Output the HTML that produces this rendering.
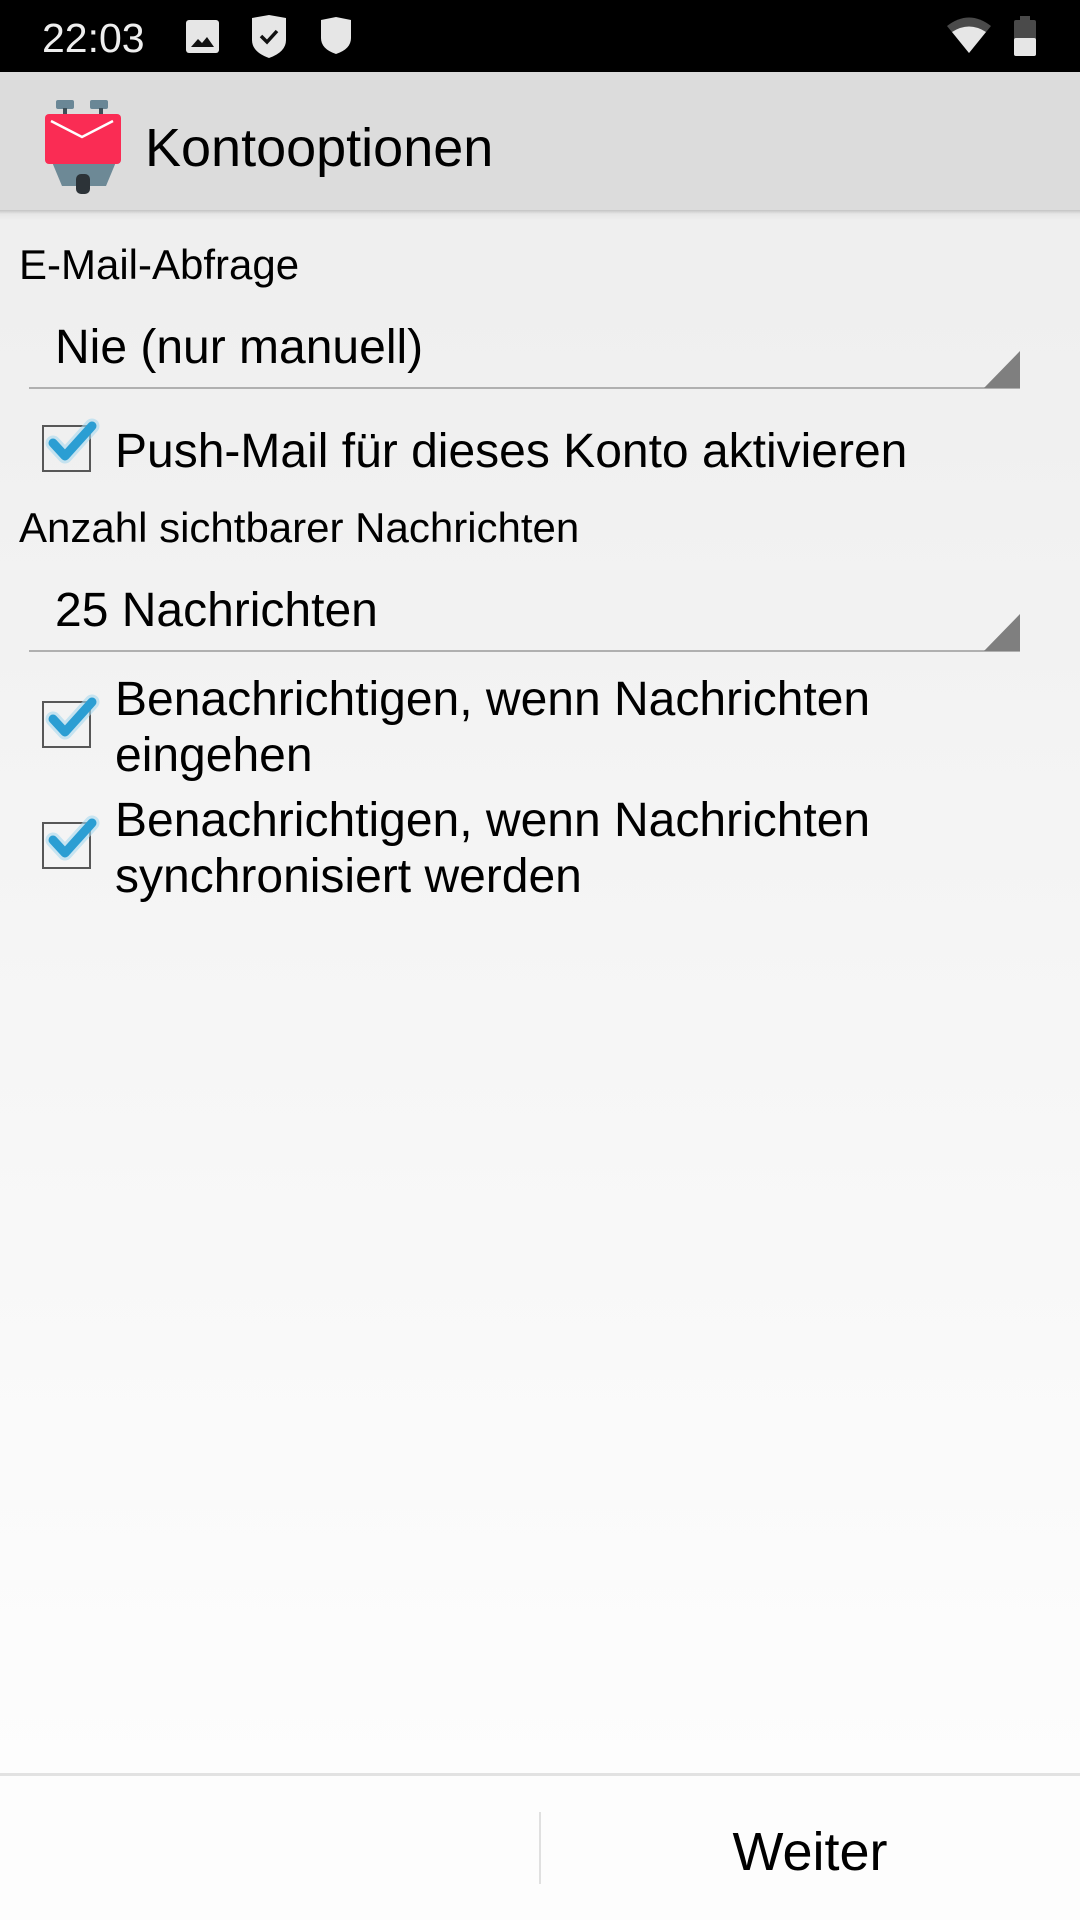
<!DOCTYPE html>
<html><head><meta charset="utf-8"><style>
*{margin:0;padding:0;box-sizing:border-box}
body{width:1080px;height:1920px;position:relative;overflow:hidden;font-family:"Liberation Sans",sans-serif;color:#000;background:linear-gradient(#eeeeee 0px,#efefef 300px,#fdfdfd 1770px)}
.a{position:absolute;white-space:nowrap;line-height:1}
.sb{position:absolute;left:0;top:0;width:1080px;height:72px;background:#000}
.ab{position:absolute;left:0;top:72px;width:1080px;height:138px;background:#dcdcdc}
.sh{position:absolute;left:0;top:210px;width:1080px;height:10px;background:linear-gradient(#c4c4c4,#e6e6e6 40%,rgba(238,238,238,0))}
.ul{position:absolute;left:29px;width:991px;height:2px;background:#b0b0b0}
.cb{position:absolute;left:42px;width:49px;height:47px;border:2.5px solid #575757}
</style></head><body>
<div class="sb"></div>
<div class="a" style="left:42px;top:18px;font-size:41px;color:#eee">22:03</div>
<svg style="position:absolute;left:184px;top:18px" width="38" height="38" viewBox="0 0 38 38"><rect x="2" y="2" width="33" height="33" rx="3" fill="#e6e6e6"/><path d="M7 29 L14 21 L18 25 L23 19 L30 29Z" fill="#111"/></svg>
<svg style="position:absolute;left:249px;top:14px" width="40" height="46" viewBox="0 0 40 46"><path d="M3 4 L20 1 L37 4 V26 Q37 38 20 44 Q3 38 3 26Z" fill="#e6e6e6"/><path d="M12 22 L18 28 L28 17" stroke="#111" stroke-width="3.5" fill="none"/></svg>
<svg style="position:absolute;left:318px;top:16px" width="36" height="40" viewBox="0 0 36 40"><path d="M3 4 L18 1 L33 4 V22 Q33 33 18 38 Q3 33 3 22Z" fill="#e6e6e6"/></svg>
<svg style="position:absolute;left:946px;top:15px" width="46" height="40" viewBox="0 0 46 40"><path d="M1 11 Q23 -6 45 11 L23 38Z" fill="#4a4a4a"/><path d="M6 17 Q23 6 40 17 L23 38Z" fill="#e6e6e6"/></svg>
<svg style="position:absolute;left:1013px;top:15px" width="24" height="42" viewBox="0 0 24 42"><rect x="7" y="1" width="10" height="5" fill="#4a4a4a"/><rect x="1" y="5" width="22" height="36" rx="2" fill="#4a4a4a"/><rect x="1" y="23" width="22" height="18" rx="2" fill="#e6e6e6"/></svg>
<div class="ab"></div>
<div class="sh"></div>
<svg style="position:absolute;left:44px;top:100px" width="80" height="96" viewBox="0 0 80 96"><rect x="12" y="0" width="18" height="9" rx="2" fill="#6a8796"/><rect x="46" y="0" width="18" height="9" rx="2" fill="#6a8796"/><rect x="19" y="8" width="4" height="8" fill="#3e4f58"/><rect x="55" y="8" width="4" height="8" fill="#3e4f58"/><path d="M8 62 H72 L62 86 H18Z" fill="#6d8996"/><rect x="32" y="74" width="14" height="20" rx="5" fill="#2c3338"/><rect x="1" y="14" width="76" height="50" rx="4" fill="#fa2c54"/><path d="M7 21 L38 37 L69 21" stroke="#fff" stroke-width="2.5" fill="none"/></svg>
<div class="a" style="left:145px;top:121px;font-size:54px">Kontooptionen</div>

<div class="a" style="left:19px;top:244px;font-size:42px">E-Mail-Abfrage</div>
<div class="a" style="left:55px;top:324px;font-size:48px">Nie (nur manuell)</div>
<div class="ul" style="top:387px"></div>
<svg style="position:absolute;left:984px;top:351px" width="36" height="37"><path d="M0 37 L36 0 V37Z" fill="#7f7f7f"/></svg>

<div class="cb" style="top:425px"></div>
<svg style="position:absolute;left:42px;top:415px" width="60" height="55" viewBox="0 0 60 55"><path d="M11 28 L23 41 L50 11" stroke="#a8d8ee" stroke-width="15" stroke-linecap="round" stroke-linejoin="round" fill="none" opacity=".6"/><path d="M11 28 L23 41 L50 11" stroke="#2b9ed3" stroke-width="9" stroke-linecap="round" stroke-linejoin="round" fill="none"/></svg>
<div class="a" style="left:115px;top:428px;font-size:48px">Push-Mail für dieses Konto aktivieren</div>

<div class="a" style="left:19px;top:507px;font-size:42px">Anzahl sichtbarer Nachrichten</div>
<div class="a" style="left:55px;top:587px;font-size:48px">25 Nachrichten</div>
<div class="ul" style="top:650px"></div>
<svg style="position:absolute;left:984px;top:614px" width="36" height="37"><path d="M0 37 L36 0 V37Z" fill="#7f7f7f"/></svg>

<div class="cb" style="top:701px"></div>
<svg style="position:absolute;left:42px;top:691px" width="60" height="55" viewBox="0 0 60 55"><path d="M11 28 L23 41 L50 11" stroke="#a8d8ee" stroke-width="15" stroke-linecap="round" stroke-linejoin="round" fill="none" opacity=".6"/><path d="M11 28 L23 41 L50 11" stroke="#2b9ed3" stroke-width="9" stroke-linecap="round" stroke-linejoin="round" fill="none"/></svg>
<div class="a" style="left:115px;top:672px;font-size:48px;line-height:56px">Benachrichtigen, wenn Nachrichten<br>eingehen</div>

<div class="cb" style="top:822px"></div>
<svg style="position:absolute;left:42px;top:812px" width="60" height="55" viewBox="0 0 60 55"><path d="M11 28 L23 41 L50 11" stroke="#a8d8ee" stroke-width="15" stroke-linecap="round" stroke-linejoin="round" fill="none" opacity=".6"/><path d="M11 28 L23 41 L50 11" stroke="#2b9ed3" stroke-width="9" stroke-linecap="round" stroke-linejoin="round" fill="none"/></svg>
<div class="a" style="left:115px;top:793px;font-size:48px;line-height:56px">Benachrichtigen, wenn Nachrichten<br>synchronisiert werden</div>

<div style="position:absolute;left:0;top:1773px;width:1080px;height:147px;background:#fdfdfd"></div>
<div style="position:absolute;left:0;top:1773px;width:1080px;height:3px;background:#e2e2e2"></div>
<div style="position:absolute;left:539px;top:1812px;width:2px;height:72px;background:#e0e0e0"></div>
<div class="a" style="left:540px;width:540px;text-align:center;top:1825px;font-size:54px">Weiter</div>
</body></html>
